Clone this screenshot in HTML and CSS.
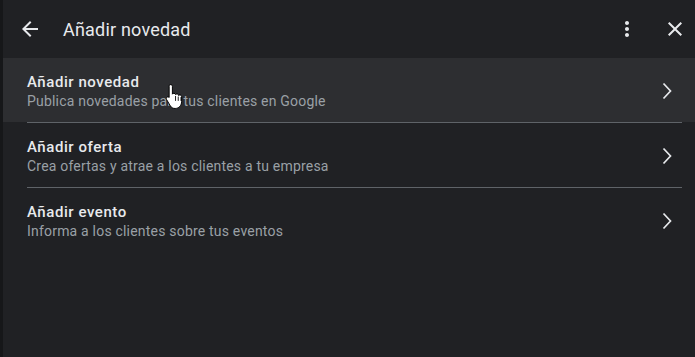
FILE: index.html
```html
<!DOCTYPE html>
<html lang="es">
<head>
<meta charset="utf-8">
<title>Añadir novedad</title>
<link rel="stylesheet" href="styles.css">
</head>
<body>
<div class="panel">
  <header class="header">
    <button class="icon-btn back" aria-label="Atrás">
      <svg width="24" height="24" viewBox="0 0 24 24"><path fill="#e8eaed" d="M20 11H7.83l5.59-5.59L12 4l-8 8 8 8 1.41-1.41L7.83 13H20v-2z"/></svg>
    </button>
    <h1 class="title">Añadir novedad</h1>
    <div class="spacer"></div>
    <button class="icon-btn" aria-label="Más">
      <svg width="24" height="24" viewBox="0 0 24 24"><path fill="#e8eaed" d="M12 8c1.1 0 2-.9 2-2s-.9-2-2-2-2 .9-2 2 .9 2 2 2zm0 2c-1.1 0-2 .9-2 2s.9 2 2 2 2-.9 2-2-.9-2-2-2zm0 6c-1.1 0-2 .9-2 2s.9 2 2 2 2-.9 2-2-.9-2-2-2z"/></svg>
    </button>
    <button class="icon-btn close" aria-label="Cerrar">
      <svg width="24" height="24" viewBox="0 0 24 24"><path fill="#e8eaed" d="M19 6.41L17.59 5 12 10.59 6.41 5 5 6.41 10.59 12 5 17.59 6.41 19 12 13.41 17.59 19 19 17.59 13.41 12z"/></svg>
    </button>
  </header>
  <ul class="list">
    <li class="item hover">
      <div class="text">
        <div class="item-title">Añadir novedad</div>
        <div class="item-sub">Publica novedades para tus clientes en Google</div>
      </div>
      <svg class="chev" width="24" height="24" viewBox="0 0 24 24"><polyline points="8.5,4.5 15.5,12 8.5,19.5" fill="none" stroke="#e8eaed" stroke-width="1.7"/></svg>
      <svg class="cursor" width="20" height="26" viewBox="0 0 18 24">
        <path d="M5 1.5c.9 0 1.6.7 1.6 1.6v7.2c.3-.5.8-.8 1.4-.8.8 0 1.4.5 1.5 1.2.3-.4.8-.6 1.3-.6.8 0 1.5.6 1.5 1.4.3-.3.7-.5 1.2-.5.9 0 1.6.7 1.6 1.6v4.6c0 3.4-2.5 6.3-5.900 6.3H9c-1.9 0-3.2-.8-4.2-2.2L1.2 15.2c-.5-.7-.3-1.7.4-2.1.6-.4 1.4-.3 1.9.2l.1.1V3.1C3.4 2.2 4.1 1.5 5 1.5z" fill="#fff" stroke="#000" stroke-width="0.9"/>
        <path d="M9.5 12v4.5M12 12.5v4M14.5 13v3.5" stroke="#000" stroke-width="0.8" fill="none"/>
      </svg>
    </li>
    <li class="item">
      <div class="text">
        <div class="item-title">Añadir oferta</div>
        <div class="item-sub">Crea ofertas y atrae a los clientes a tu empresa</div>
      </div>
      <svg class="chev" width="24" height="24" viewBox="0 0 24 24"><polyline points="8.5,4.5 15.5,12 8.5,19.5" fill="none" stroke="#e8eaed" stroke-width="1.7"/></svg>
    </li>
    <li class="item last">
      <div class="text">
        <div class="item-title">Añadir evento</div>
        <div class="item-sub">Informa a los clientes sobre tus eventos</div>
      </div>
      <svg class="chev" width="24" height="24" viewBox="0 0 24 24"><polyline points="8.5,4.5 15.5,12 8.5,19.5" fill="none" stroke="#e8eaed" stroke-width="1.7"/></svg>
    </li>
  </ul>
</div>
</body>
</html>
```
FILE: styles.css
```css
html, body {
  margin: 0;
  padding: 0;
  height: 100%;
}
body {
  background: #161719;
  font-family: Roboto, "Liberation Sans", Arial, sans-serif;
  overflow: hidden;
}
.panel {
  margin-left: 3px;
  height: 100%;
  background: #202124;
  display: flex;
  flex-direction: column;
}
.header {
  height: 58px;
  display: flex;
  align-items: center;
  padding: 0 8px 0 15px;
  box-sizing: border-box;
}
.icon-btn {
  background: none;
  border: 0;
  padding: 0;
  width: 24px;
  height: 24px;
  display: flex;
  cursor: pointer;
}
.back {
  margin-right: 21px;
}
.title {
  margin: 0;
  font-size: 18px;
  font-weight: 400;
  color: #e8eaed;
  line-height: 24px;
  letter-spacing: 0.2px;
  padding-top: 1px;
}
.spacer {
  flex: 1;
}
.close {
  margin-left: 24px;
}
.list {
  list-style: none;
  margin: 0;
  padding: 0;
}
.item {
  position: relative;
  display: flex;
  align-items: center;
  height: 65px;
  box-sizing: border-box;
  padding-left: 24px;
}
.item::after {
  content: "";
  position: absolute;
  left: 24px;
  right: 13px;
  bottom: 0;
  height: 1px;
  background: #5f6368;
}
.item.last::after {
  display: none;
}
.item.hover {
  background: linear-gradient(#2d2e31, #2d2e31) top / 100% 64px no-repeat;
}
.text {
  flex: 1;
  padding-top: 3px;
}
.item-title {
  font-size: 15px;
  font-weight: 500;
  color: #e8eaed;
  line-height: 19px;
  letter-spacing: 0.55px;
}
.item-sub {
  font-size: 14px;
  color: #9aa0a6;
  line-height: 19px;
  letter-spacing: 0.2px;
}
.chev {
  margin-right: 16px;
  margin-top: 1px;
}
.cursor {
  position: absolute;
  left: 162px;
  top: 25px;
}
```
